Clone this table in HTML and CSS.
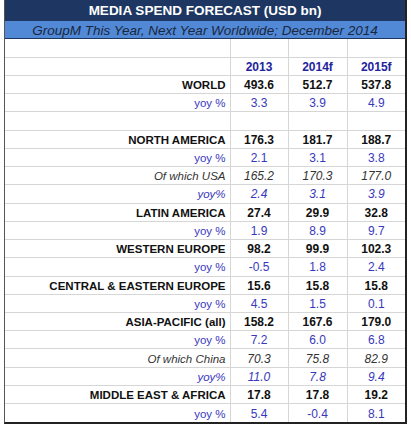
FILE: index.html
```html
<!DOCTYPE html>
<html lang="en">
<head>
  <meta charset="UTF-8">
  <meta name="viewport" content="width=device-width, initial-scale=1.0">
  <title>Media Spend Forecast</title>
  <link rel="stylesheet" href="styles.css">
</head>
<body>
  <div class="forecast">
    <div class="title">MEDIA SPEND FORECAST (USD bn)</div>
    <div class="subtitle">GroupM This Year, Next Year Worldwide; December 2014</div>
    <table class="spend">
      <colgroup>
        <col class="col-label">
        <col class="col-num">
        <col class="col-mid">
        <col class="col-num">
      </colgroup>
      <tr class="blank"><td></td><td></td><td></td><td></td></tr>
      <tr class="years"><td></td><td>2013</td><td>2014f</td><td>2015f</td></tr>
      <!-- World -->
      <tr class="region"><td>WORLD</td><td>493.6</td><td>512.7</td><td>537.8</td></tr>
      <tr class="yoy"><td>yoy %</td><td>3.3</td><td>3.9</td><td>4.9</td></tr>
      <tr class="blank"><td></td><td></td><td></td><td></td></tr>
      <!-- Regions -->
      <tr class="region"><td>NORTH AMERICA</td><td>176.3</td><td>181.7</td><td>188.7</td></tr>
      <tr class="yoy"><td>yoy %</td><td>2.1</td><td>3.1</td><td>3.8</td></tr>
      <tr class="sub"><td>Of which USA</td><td>165.2</td><td>170.3</td><td>177.0</td></tr>
      <tr class="yoy sub-yoy"><td>yoy%</td><td>2.4</td><td>3.1</td><td>3.9</td></tr>
      <tr class="region"><td>LATIN AMERICA</td><td>27.4</td><td>29.9</td><td>32.8</td></tr>
      <tr class="yoy"><td>yoy %</td><td>1.9</td><td>8.9</td><td>9.7</td></tr>
      <tr class="region"><td>WESTERN EUROPE</td><td>98.2</td><td>99.9</td><td>102.3</td></tr>
      <tr class="yoy"><td>yoy %</td><td>-0.5</td><td>1.8</td><td>2.4</td></tr>
      <tr class="region"><td>CENTRAL &amp; EASTERN EUROPE</td><td>15.6</td><td>15.8</td><td>15.8</td></tr>
      <tr class="yoy"><td>yoy %</td><td>4.5</td><td>1.5</td><td>0.1</td></tr>
      <tr class="region"><td>ASIA-PACIFIC (all)</td><td>158.2</td><td>167.6</td><td>179.0</td></tr>
      <tr class="yoy"><td>yoy %</td><td>7.2</td><td>6.0</td><td>6.8</td></tr>
      <tr class="sub"><td>Of which China</td><td>70.3</td><td>75.8</td><td>82.9</td></tr>
      <tr class="yoy sub-yoy"><td>yoy%</td><td>11.0</td><td>7.8</td><td>9.4</td></tr>
      <tr class="region"><td>MIDDLE EAST &amp; AFRICA</td><td>17.8</td><td>17.8</td><td>19.2</td></tr>
      <tr class="yoy"><td>yoy %</td><td>5.4</td><td>-0.4</td><td>8.1</td></tr>
    </table>
  </div>
</body>
</html>
```
FILE: styles.css
```css
body {
  margin: 0;
  background: #fff;
  font-family: 'Liberation Sans', Arial, sans-serif;
}
.forecast {
  width: 400px;
  margin-left: 4px;
  border-left: 1px solid #555;
  border-right: 2px solid #222;
  border-bottom: 2px solid #222;
}
.title {
  height: 21px;
  line-height: 22px;
  background: #1e3762;
  color: #fff;
  font-weight: bold;
  font-size: 13.5px;
  text-align: center;
}
.subtitle {
  height: 17px;
  line-height: 19px;
  background: #5189d6;
  border-bottom: 1px solid #1e3762;
  color: #1a2740;
  font-style: italic;
  font-size: 13.5px;
  text-align: center;
}
.spend {
  width: 100%;
  border-collapse: collapse;
  table-layout: fixed;
  font-size: 12px;
}
.col-label { width: 225px; }
.col-num { width: 58px; }
.col-mid { width: 59px; }
.spend tr {
  height: 18.24px;
}
.spend td {
  padding: 1px 0 0;
  border: 1px solid #d6d6d6;
  text-align: center;
  color: #111;
  font-weight: bold;
}
.spend td:first-child {
  border-left: none;
  text-align: right;
  padding-right: 4px;
  font-size: 11.5px;
}
.spend td:last-child {
  border-right: none;
}
.spend tr:first-child td {
  border-top: none;
}
.spend tr:last-child td {
  border-bottom: none;
}
.years td {
  color: #23239e;
}
.yoy td {
  color: #3838bd;
  font-weight: normal;
}
.sub td {
  color: #333;
  font-weight: normal;
  font-style: italic;
}
.sub-yoy td {
  font-style: italic;
}
```
